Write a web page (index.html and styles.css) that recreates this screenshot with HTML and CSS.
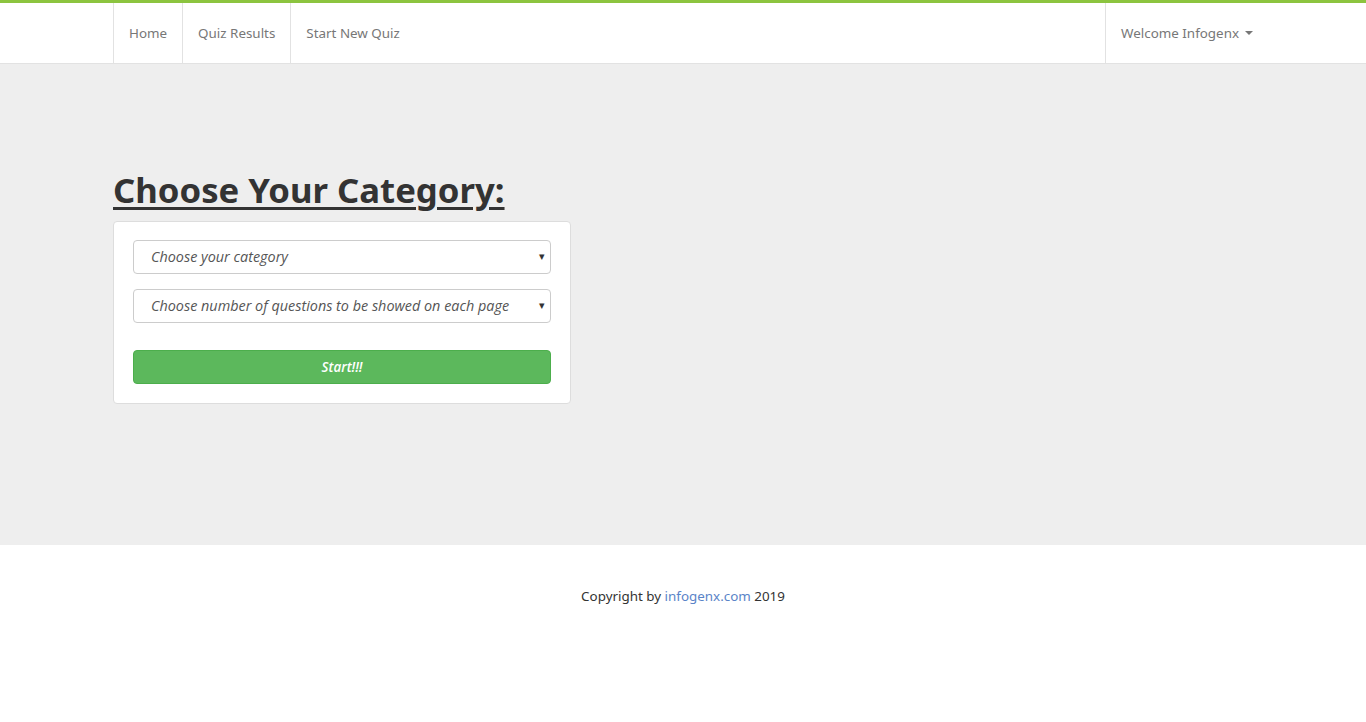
FILE: index.html
```html
<!DOCTYPE html>
<html lang="en">
<head>
<meta charset="utf-8">
<title>Quiz</title>
<link rel="stylesheet" href="styles.css">
</head>
<body>
<nav class="navbar">
  <div class="container nav-inner">
    <ul class="nav">
      <li><a href="#">Home</a></li>
      <li><a href="#">Quiz Results</a></li>
      <li><a href="#">Start New Quiz</a></li>
    </ul>
    <ul class="nav nav-right">
      <li><a href="#">Welcome Infogenx <span class="caret"></span></a></li>
    </ul>
  </div>
</nav>
<main class="main">
  <div class="container">
    <h1 class="title">Choose Your Category:</h1>
    <div class="panel">
      <div class="select-wrap">
        <div class="select">Choose your category</div>
        <span class="arrow">&#9662;</span>
      </div>
      <div class="select-wrap">
        <div class="select">Choose number of questions to be showed on each page</div>
        <span class="arrow">&#9662;</span>
      </div>
      <button class="btn">Start!!!</button>
    </div>
  </div>
</main>
<footer class="footer">
  Copyright by <a href="#">infogenx.com</a> 2019
</footer>
</body>
</html>
```
FILE: styles.css
```css
* { box-sizing: border-box; }
html, body { margin: 0; padding: 0; }
body {
  font-family: "Noto Sans", "Open Sans", sans-serif;
  font-size: 13.4px;
  color: #333;
  background: #fff;
}
.container {
  width: 1140px;
  margin: 0 auto;
}
.navbar {
  border-top: 3px solid #8cc43f;
  border-bottom: 1px solid #e2e2e2;
  background: #fff;
  height: 64px;
}
.nav-inner {
  display: flex;
  justify-content: space-between;
  height: 60px;
}
.nav {
  display: flex;
  list-style: none;
  margin: 0;
  padding: 0;
}
.nav li {
  border-left: 1px solid #e2e2e2;
  display: flex;
}
.nav a {
  display: flex;
  align-items: center;
  padding: 0 15px 1px;
  color: #777;
  text-decoration: none;
  font-size: 13.4px;
}
.nav-right a { padding-right: 0; }
.caret {
  display: inline-block;
  width: 0;
  height: 0;
  margin-left: 6px;
  border-top: 4px solid #777;
  border-left: 4px solid transparent;
  border-right: 4px solid transparent;
}
.main {
  background: #eee;
  height: 481px;
  padding-top: 106px;
}
.title {
  margin: 0 0 11px;
  font-size: 34.7px;
  font-weight: 700;
  line-height: 40px;
  text-decoration: underline;
  text-decoration-thickness: 3px;
  text-underline-offset: 4px;
  color: #333;
}
.panel {
  width: 458px;
  background: #fff;
  border: 1px solid #ddd;
  border-radius: 4px;
  padding: 18px 19px 19px;
  display: flex;
  flex-direction: column;
}
.select-wrap {
  position: relative;
  margin-bottom: 15px;
}
.select-wrap + .select-wrap { margin-bottom: 27px; }
.select {
  height: 34px;
  border: 1px solid #ccc;
  border-radius: 4px;
  padding: 0 30px 2px 17px;
  display: flex;
  align-items: center;
  font-family: "Open Sans", "Noto Sans", sans-serif;
  font-style: italic;
  color: #555;
  font-size: 14.4px;
  white-space: nowrap;
}
.arrow {
  position: absolute;
  right: 6px;
  top: 8px;
  font-size: 11px;
  color: #333;
  font-style: normal;
}
.btn {
  height: 34px;
  border: 1px solid #4cae4c;
  border-radius: 4px;
  background: #5cb85c;
  color: #fff;
  font-family: "Open Sans", "Noto Sans", sans-serif;
  font-style: italic;
  font-weight: 600;
  font-size: 13.4px;
  cursor: pointer;
}
.footer {
  text-align: center;
  padding-top: 42px;
  font-size: 13.4px;
  color: #333;
}
.footer a {
  color: #5a84c8;
  text-decoration: none;
}
```
